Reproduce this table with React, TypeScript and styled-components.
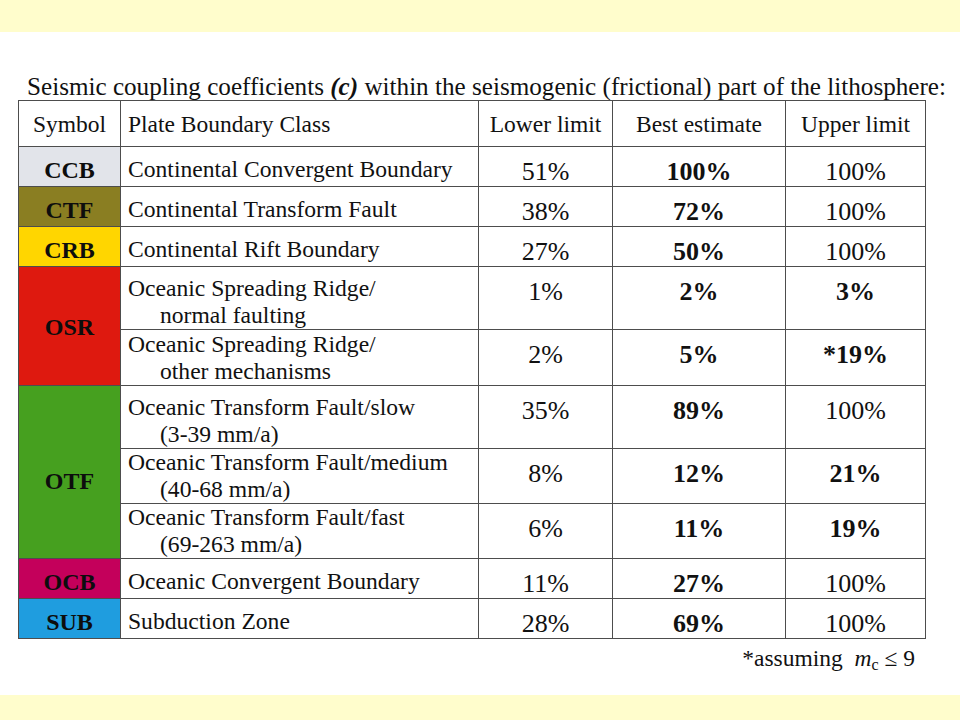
import React from 'react';
import styled, { createGlobalStyle } from 'styled-components';

const Global = createGlobalStyle`
  html, body { margin: 0; padding: 0; background: #fff; }
  body { font-family: "Liberation Serif", "Times New Roman", serif; color: #111; }
  * { box-sizing: border-box; }
`;

const Page = styled.div`
  width: 960px;
  height: 720px;
  display: flex;
  flex-direction: column;
  background: #fff;
  overflow: hidden;
`;

const Band = styled.div<{ $h: number }>`
  flex: none;
  height: ${(p) => p.$h}px;
  background: #fffdcc;
`;

const Slide = styled.main`
  flex: 1;
  display: flex;
  flex-direction: column;
  padding: 41px 0 0 18px;
`;

const Title = styled.h1`
  margin: 0 0 0 9px;
  font-size: 25.15px;
  line-height: 27px;
  font-weight: normal;
  white-space: nowrap;
`;

const Em = styled.i`
  font-weight: bold;
`;

const Table = styled.table`
  width: 907px;
  table-layout: fixed;
  border-collapse: collapse;
  border: 1px solid #4d4d4d;
`;

const Row = styled.tr<{ $h: number }>`
  height: ${(p) => p.$h}px;
`;

const HeadCell = styled.th<{ $left?: boolean }>`
  border: 1px solid #4d4d4d;
  padding: ${(p) => (p.$left ? '10px 0 0 7px' : '10px 0 0 0')};
  font-size: 23.5px;
  line-height: 27px;
  font-weight: normal;
  text-align: ${(p) => (p.$left ? 'left' : 'center')};
  vertical-align: top;
  white-space: nowrap;
`;

const SymbolCell = styled.td<{ $bg: string; $top: number }>`
  border: 1px solid #4d4d4d;
  background: ${(p) => p.$bg};
  padding: ${(p) => p.$top}px 0 0;
  font-size: 24px;
  line-height: 27px;
  font-weight: bold;
  text-align: center;
  vertical-align: top;
  color: #0d0d0d;
`;

const ClassCell = styled.td<{ $two: boolean }>`
  border: 1px solid #4d4d4d;
  padding: ${(p) => (p.$two ? '0 0 0 7px' : '9px 0 0 7px')};
  font-size: 23.6px;
  line-height: 27px;
  vertical-align: ${(p) => (p.$two ? 'bottom' : 'top')};
  white-space: nowrap;
`;

const SubLine = styled.div`
  padding-left: 32px;
`;

const NumCell = styled.td<{ $bold?: boolean }>`
  border: 1px solid #4d4d4d;
  padding: 12px 0 0;
  font-size: 26px;
  line-height: 26px;
  font-weight: ${(p) => (p.$bold ? 'bold' : 'normal')};
  text-align: center;
  vertical-align: top;
  white-space: nowrap;
`;

const Footer = styled.div`
  width: 907px;
  margin-top: 6px;
  padding-right: 10px;
  text-align: right;
  font-size: 23.5px;
  line-height: 26px;
`;

const Sub = styled.sub`
  font-size: 16px;
  vertical-align: -4px;
  font-style: normal;
`;

type RowData = {
  sym?: string;
  color?: string;
  span?: number;
  symTop?: number;
  cls: string[];
  lo: string;
  best: string;
  up: string;
  upBold?: boolean;
  h: number;
};

const rows: RowData[] = [
  { sym: 'CCB', color: '#e2e4ea', span: 1, symTop: 10, cls: ['Continental Convergent Boundary'], lo: '51%', best: '100%', up: '100%', h: 40 },
  { sym: 'CTF', color: '#8a7e22', span: 1, symTop: 10, cls: ['Continental Transform Fault'], lo: '38%', best: '72%', up: '100%', h: 40 },
  { sym: 'CRB', color: '#ffd600', span: 1, symTop: 10, cls: ['Continental Rift Boundary'], lo: '27%', best: '50%', up: '100%', h: 40 },
  { sym: 'OSR', color: '#de190f', span: 2, symTop: 47, cls: ['Oceanic Spreading Ridge/', 'normal faulting'], lo: '1%', best: '2%', up: '3%', upBold: true, h: 63 },
  { cls: ['Oceanic Spreading Ridge/', 'other mechanisms'], lo: '2%', best: '5%', up: '*19%', upBold: true, h: 56 },
  { sym: 'OTF', color: '#46a01f', span: 3, symTop: 82, cls: ['Oceanic Transform Fault/slow', '(3-39 mm/a)'], lo: '35%', best: '89%', up: '100%', h: 63 },
  { cls: ['Oceanic Transform Fault/medium', '(40-68 mm/a)'], lo: '8%', best: '12%', up: '21%', upBold: true, h: 55 },
  { cls: ['Oceanic Transform Fault/fast', '(69-263 mm/a)'], lo: '6%', best: '11%', up: '19%', upBold: true, h: 55 },
  { sym: 'OCB', color: '#c4005b', span: 1, symTop: 10, cls: ['Oceanic Convergent Boundary'], lo: '11%', best: '27%', up: '100%', h: 40 },
  { sym: 'SUB', color: '#1f9ddf', span: 1, symTop: 10, cls: ['Subduction Zone'], lo: '28%', best: '69%', up: '100%', h: 40 },
];

export default function App() {
  return (
    <>
      <Global />
      <Page>
        <Band $h={32} />
        <Slide>
          <Title>
            Seismic coupling coefficients <Em>(c)</Em> within the seismogenic (frictional) part of the lithosphere:
          </Title>
          <Table>
            <colgroup>
              <col style={{ width: 102 }} />
              <col style={{ width: 358 }} />
              <col style={{ width: 134 }} />
              <col style={{ width: 173 }} />
              <col style={{ width: 140 }} />
            </colgroup>
            <thead>
              <Row $h={46}>
                <HeadCell>Symbol</HeadCell>
                <HeadCell $left>Plate Boundary Class</HeadCell>
                <HeadCell>Lower limit</HeadCell>
                <HeadCell>Best estimate</HeadCell>
                <HeadCell>Upper limit</HeadCell>
              </Row>
            </thead>
            <tbody>
              {rows.map((r, i) => (
                <Row key={i} $h={r.h}>
                  {r.sym && (
                    <SymbolCell rowSpan={r.span} $bg={r.color!} $top={r.symTop!}>
                      {r.sym}
                    </SymbolCell>
                  )}
                  <ClassCell $two={r.cls.length > 1}>
                    {r.cls[0]}
                    {r.cls[1] && <SubLine>{r.cls[1]}</SubLine>}
                  </ClassCell>
                  <NumCell>{r.lo}</NumCell>
                  <NumCell $bold>{r.best}</NumCell>
                  <NumCell $bold={r.upBold}>{r.up}</NumCell>
                </Row>
              ))}
            </tbody>
          </Table>
          <Footer>
            *assuming&nbsp; <i>m</i>
            <Sub>c</Sub> ≤ 9
          </Footer>
        </Slide>
        <Band $h={25} />
      </Page>
    </>
  );
}
